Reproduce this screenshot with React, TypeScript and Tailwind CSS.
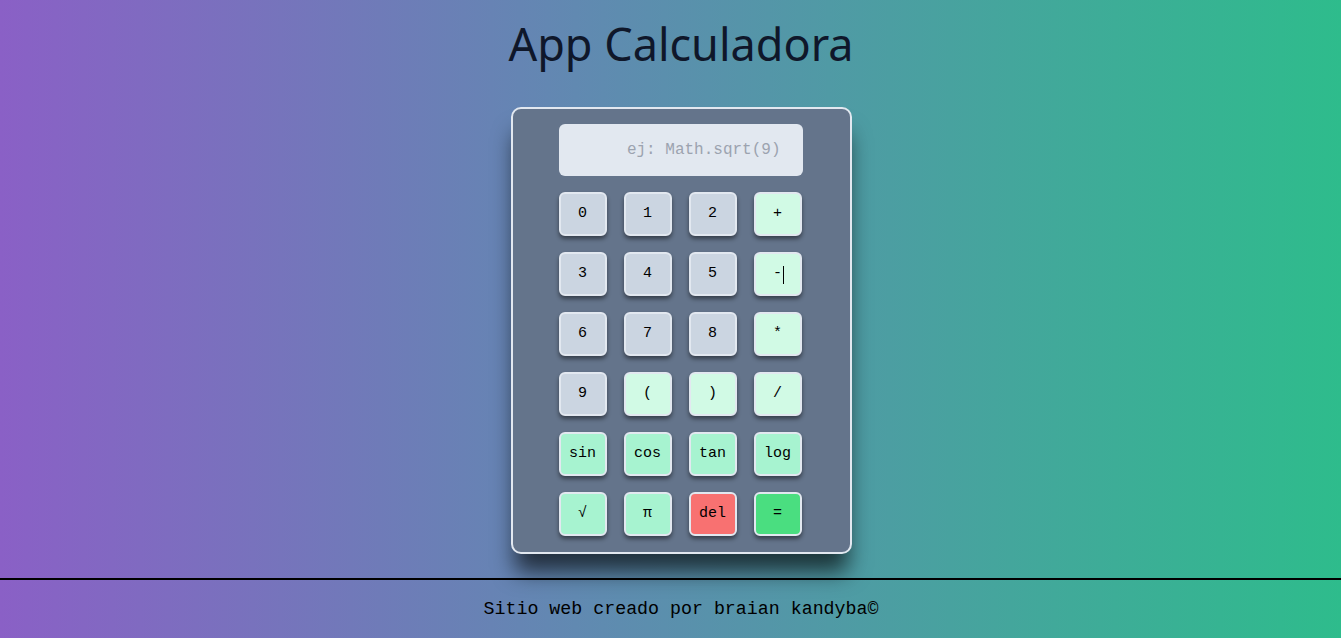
import { FC } from 'react'

type Key = { label: string; tone: 'num' | 'op' | 'fn' | 'del' | 'eq' }

const keys: Key[] = [
  { label: '0', tone: 'num' },
  { label: '1', tone: 'num' },
  { label: '2', tone: 'num' },
  { label: '+', tone: 'op' },
  { label: '3', tone: 'num' },
  { label: '4', tone: 'num' },
  { label: '5', tone: 'num' },
  { label: '-', tone: 'op' },
  { label: '6', tone: 'num' },
  { label: '7', tone: 'num' },
  { label: '8', tone: 'num' },
  { label: '*', tone: 'op' },
  { label: '9', tone: 'num' },
  { label: '(', tone: 'op' },
  { label: ')', tone: 'op' },
  { label: '/', tone: 'op' },
  { label: 'sin', tone: 'fn' },
  { label: 'cos', tone: 'fn' },
  { label: 'tan', tone: 'fn' },
  { label: 'log', tone: 'fn' },
  { label: '√', tone: 'fn' },
  { label: 'π', tone: 'fn' },
  { label: 'del', tone: 'del' },
  { label: '=', tone: 'eq' },
]

const toneClass: Record<Key['tone'], string> = {
  num: 'bg-[#cbd5e1]',
  op: 'bg-[#d1fae5]',
  fn: 'bg-[#a7f3d0]',
  del: 'bg-[#f87171]',
  eq: 'bg-[#4ade80]',
}

const App: FC = (): JSX.Element => {
  return (
    <div className="min-h-screen flex flex-col bg-[linear-gradient(to_right,#8a60c6,#5f8bb0_45%,#2ebc8c)]">
      <main className="flex-1 flex flex-col items-center pl-[21px]">
        <h1 className="mt-[12px] text-[45px] leading-[64px] text-[#0f172a] font-['Noto_Sans',sans-serif]">
          App Calculadora
        </h1>
        <div className="mt-[31px] w-[341px] bg-[#64748b] border-2 border-[#e2e8f0] rounded-[10px] px-[46px] pt-[15px] pb-[16px] shadow-[0_22px_22px_-4px_rgba(0,0,0,0.65)]">
          <input
            type="text"
            placeholder="ej: Math.sqrt(9)"
            className="w-[244px] h-[52px] rounded-md bg-[#e2e8f0] text-right pr-[22px] text-[16px] font-['Liberation_Mono',monospace] placeholder:text-[#9ca3af] outline-none"
          />
          <div className="mt-4 grid grid-cols-[repeat(4,48px)] gap-x-[17px] gap-y-4">
            {keys.map((k) => (
              <button
                key={k.label}
                className={`relative h-11 w-12 rounded-md border-2 border-[#e2e8f0] text-[15px] text-black font-['Liberation_Mono',monospace] shadow-[0_3px_4px_rgba(0,0,0,0.45)] ${toneClass[k.tone]}`}
              >
                {k.label}
                {k.label === '-' && (
                  <span className="absolute left-[27px] top-[12px] h-[18px] w-px bg-black" />
                )}
              </button>
            ))}
          </div>
        </div>
      </main>
      <footer className="mt-[18px] border-t-2 border-black pl-[21px] py-[17px] text-center text-[18.3px] leading-6 text-black font-['Liberation_Mono',monospace]">
        Sitio web creado por braian kandyba©
      </footer>
    </div>
  )
}

export default App
